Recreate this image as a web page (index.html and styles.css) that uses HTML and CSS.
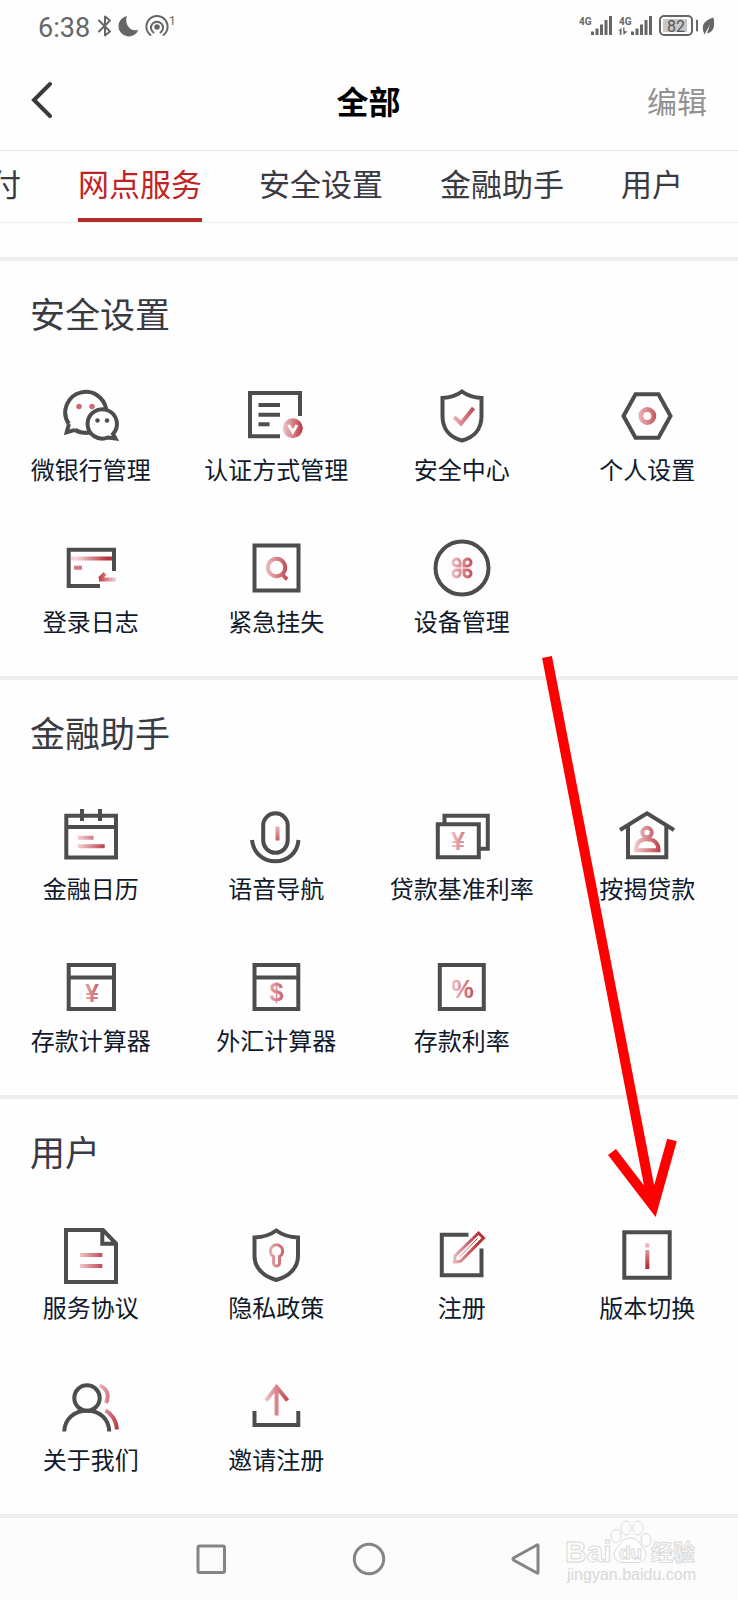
FILE: index.html
```html
<!DOCTYPE html>
<html lang="zh-CN">
<head>
<meta charset="utf-8">
<meta name="viewport" content="width=device-width, initial-scale=1">
<title>全部</title>
<link rel="stylesheet" href="styles.css">
</head>
<body>
<svg class="defs" aria-hidden="true">
  <defs>
    <linearGradient id="red" gradientUnits="userSpaceOnUse" x1="16" y1="0" x2="46" y2="0">
      <stop offset="0" stop-color="#f5d5d8"/><stop offset="1" stop-color="#b9303a"/>
    </linearGradient>
    <linearGradient id="red-down" gradientUnits="userSpaceOnUse" x1="0" y1="18" x2="0" y2="42">
      <stop offset="0" stop-color="#f0cdd0"/><stop offset="1" stop-color="#b4323a"/>
    </linearGradient>
    <linearGradient id="red-back" gradientUnits="userSpaceOnUse" x1="37" y1="0" x2="56" y2="0">
      <stop offset="0" stop-color="#bd3540"/><stop offset="1" stop-color="#f6dcde"/>
    </linearGradient>
    <linearGradient id="red-side" gradientUnits="userSpaceOnUse" x1="36" y1="0" x2="58" y2="0">
      <stop offset="0" stop-color="#f3cdd0"/><stop offset="1" stop-color="#b9303a"/>
    </linearGradient>
  </defs>
</svg>

<div class="screen">
  <div class="status">
    <div class="status-left">
      <span class="clock">6:38</span>
      <svg width="80" height="28" viewBox="0 0 80 28" aria-hidden="true">
        <path class="s-line" d="M4 8.500 15 19.500 10 23.500V4.500L15 8.500 4 19.500"/>
        <path class="s-fill" d="M32 4A10.300 10.300 0 1 0 43.500 17.500C37 21 28.500 13 32 4Z"/>
        <circle class="s-fill" cx="62" cy="15" r="2.800"/>
        <path class="s-line" d="M58.500 20.500A6 6 0 1 1 65.500 20.500M55.500 23A10.600 10.600 0 1 1 68.500 23"/>
        <text class="s-text" x="74" y="13" font-size="12">1</text>
      </svg>
    </div>
    <svg width="142" height="28" viewBox="0 0 142 28" aria-hidden="true">
      <text class="s-text s-net" x="1" y="13">4G</text>
      <path class="s-bars" d="M14.500 19.500V23M19 16.500V23M23.500 12.500V23M28 8V23M32.500 4V23"/>
      <text class="s-text s-net" x="41" y="13">4G</text>
      <path class="s-fill" d="M40.500 19 43.500 15.500V23H41.800V19ZM45 15.500H46.500V19L49.500 19.500 45.500 23Z"/>
      <path class="s-bars" d="M54.500 19.500V23M59 16.500V23M63.500 12.500V23M68 8V23M72.500 4V23"/>
      <rect x="85" y="7" width="24" height="13" fill="#c8c8c8"/>
      <rect class="s-line" x="82" y="4" width="32" height="19" rx="4"/>
      <text class="s-text s-batt" x="98" y="19.500" font-size="16">82</text>
      <path class="s-line" d="M119 8.500V18.500"/>
      <path class="s-fill" d="M126 21C122 11 130 7 135.500 5.500 137 14 136 20 129 21.500L132 12.500 126.500 22.500Z"/>
    </svg>
  </div>

  <header class="header">
    <button class="back" type="button" aria-label="返回">
      <svg width="24" height="38" viewBox="0 0 24 38"><path d="M20 3 4 19 20 35"/></svg>
    </button>
    <h1 class="title">全部</h1>
    <button class="edit" type="button">编辑</button>
  </header>

  <nav class="tabs">
    <a class="tab" href="#">付</a>
    <a class="tab tab-active" href="#">网点服务</a>
    <a class="tab" href="#safe">安全设置</a>
    <a class="tab" href="#finance">金融助手</a>
    <a class="tab" href="#user">用户</a>
  </nav>

  <main class="content">
    <section class="section" id="safe">
      <h2 class="section-title">安全设置</h2>
      <div class="grid">
        <a class="item" href="#">
          <svg class="icon" viewBox="0 0 60 60"><path d="M7.900 38 5.700 46.300 14 43.800M7.900 38A20.500 20.500 0 1 1 14 43.800Q19 47.500 27 46.500"/><circle cx="18" cy="20.500" r="2.800" class="dot"/><circle cx="31" cy="20.500" r="2.800" class="dot"/><path class="paper" d="M52 48A14.700 14.700 0 1 0 47 51.500L54.500 52.500Z"/><circle cx="36.500" cy="34.500" r="2.200" class="ink"/><circle cx="46" cy="34.500" r="2.200" class="ink"/></svg>
          <span class="label">微银行管理</span>
        </a>
        <a class="item" href="#">
          <svg class="icon" viewBox="0 0 60 60"><path d="M34 50.300H4V7H54V30M12.500 19H34M12.500 28.700H34M12.500 38.300H23.500"/><circle class="fill" cx="46.800" cy="42.300" r="10"/><path class="white" d="M42.500 39 46.800 46 51 39"/></svg>
          <span class="label">认证方式管理</span>
        </a>
        <a class="item" href="#">
          <svg class="icon" viewBox="0 0 60 60"><path d="M30 5.500Q38 11.500 49.500 12V30C49.500 43 42 51.500 30 54.500 18 51.500 10.500 43 10.500 30V12Q22 11.500 30 5.500Z"/><path class="red" d="M22 31 29 37.500 41.500 22"/></svg>
          <span class="label">安全中心</span>
        </a>
        <a class="item" href="#">
          <svg class="icon" viewBox="0 0 60 60"><path d="M18.500 8.300H41.500L53.500 30 41.500 51.700H18.500L6.500 30Z"/><circle class="red thick" cx="30.300" cy="30" r="6.500"/></svg>
          <span class="label">个人设置</span>
        </a>
        <a class="item" href="#">
          <svg class="icon" viewBox="0 0 60 60"><path d="M39 48H7.700V11.700H53V33"/><path class="red" d="M10 20.500H51"/><path class="dash" d="M13 29.700H21"/><path class="red-back" d="M38 41.500H55M38.500 41 44 35.500"/></svg>
          <span class="label">登录日志</span>
        </a>
        <a class="item" href="#">
          <svg class="icon" viewBox="0 0 60 60"><path d="M8.500 7.500H52.500V52.500H8.500Z"/><circle class="red" cx="30.500" cy="29.500" r="8.700"/><path class="red" d="M36 36 41 41.500"/></svg>
          <span class="label">紧急挂失</span>
        </a>
        <a class="item" href="#">
          <svg class="icon" viewBox="0 0 60 60"><circle cx="30" cy="30" r="26.500"/><path class="red thin" d="M28 28H24.500A3.500 3.500 0 1 1 28 24.500ZM32 28V24.500A3.500 3.500 0 1 1 35.500 28ZM28 32V35.500A3.500 3.500 0 1 1 24.500 32ZM32 32H35.500A3.500 3.500 0 1 1 32 35.500Z"/></svg>
          <span class="label">设备管理</span>
        </a>
      </div>
    </section>

    <section class="section" id="finance">
      <h2 class="section-title">金融助手</h2>
      <div class="grid">
        <a class="item" href="#">
          <svg class="icon" viewBox="0 0 60 60"><path d="M5.300 10.700H55V52.500H5.300ZM5 22H55M21 4V16M39 4V16"/><path class="red" d="M16.700 32.700H32.500M16.700 41.300H43.700"/></svg>
          <span class="label">金融日历</span>
        </a>
        <a class="item" href="#">
          <svg class="icon" viewBox="0 0 60 60"><rect x="17.200" y="8.300" width="24.500" height="39.500" rx="12.200"/><path d="M6 35C7.500 48 17 56.300 29.300 56.300S51.500 48 52.500 35"/><path class="red-down" d="M31.500 21.500V35.500"/></svg>
          <span class="label">语音导航</span>
        </a>
        <a class="item" href="#">
          <svg class="icon" viewBox="0 0 60 60"><path d="M12.500 18V10.700H55.800V43.700H48M5.800 19.300H46.800V52.300H5.800Z"/><text class="sign" x="26" y="45">¥</text></svg>
          <span class="label">贷款基准利率</span>
        </a>
        <a class="item" href="#">
          <svg class="icon" viewBox="0 0 60 60"><path d="M3 25 30 8.300 57 25M11 21V52.300H49.300V21"/><circle class="red" cx="30" cy="27.500" r="4.700"/><path class="red" d="M19 45.300C19 38 23 34.300 30 34.300S41.500 38 41.500 45.300Z"/></svg>
          <span class="label">按揭贷款</span>
        </a>
        <a class="item" href="#">
          <svg class="icon" viewBox="0 0 60 60"><path d="M7.700 8H53V52H7.700ZM7 20.500H53"/><text class="sign" x="31" y="45">¥</text></svg>
          <span class="label">存款计算器</span>
        </a>
        <a class="item" href="#">
          <svg class="icon" viewBox="0 0 60 60"><path d="M8.500 8H52.300V52H8.500ZM8 20.500H52"/><text class="sign" x="30.500" y="44">$</text></svg>
          <span class="label">外汇计算器</span>
        </a>
        <a class="item" href="#">
          <svg class="icon" viewBox="0 0 60 60"><path d="M7.800 8H51.800V52H7.800Z"/><text class="sign" x="30.500" y="41">%</text></svg>
          <span class="label">存款利率</span>
        </a>
      </div>
    </section>

    <section class="section" id="user">
      <h2 class="section-title">用户</h2>
      <div class="grid">
        <a class="item" href="#">
          <svg class="icon" viewBox="0 0 60 60"><path d="M5 6H42L55 19.500V58H5ZM41.300 6V19.700H55"/><path class="red" d="M19 31H41.300M19 42H41.300"/></svg>
          <span class="label">服务协议</span>
        </a>
        <a class="item" href="#">
          <svg class="icon" viewBox="0 0 60 60"><path d="M30.300 6.500Q39 13 52 13.500V32C52 44 43 52.500 30.300 56 17.500 52.500 8.500 44 8.500 32V13.500Q21.500 13 30.300 6.500Z"/><path class="red thin" d="M27.500 32.500A6.200 6.200 0 1 1 33.500 32.500L33.500 39A3 3 0 0 1 27.500 39Z"/></svg>
          <span class="label">隐私政策</span>
        </a>
        <a class="item" href="#">
          <svg class="icon" viewBox="0 0 60 60"><path d="M36.500 10.700H9.800V51.300H49.500V24.500"/><path class="red thin" d="M46.500 9 51.500 14 28.500 37.300 22.500 38 23 32Z"/><path class="red hair" d="M27.500 33 45.500 14.500"/></svg>
          <span class="label">注册</span>
        </a>
        <a class="item" href="#">
          <svg class="icon" viewBox="0 0 60 60"><path d="M7.300 8.300H52.700V53.700H7.300Z"/><path class="red-down" d="M30.300 19V23.500M30.300 26V45"/></svg>
          <span class="label">版本切换</span>
        </a>
        <a class="item" href="#">
          <svg class="icon" viewBox="0 0 60 60"><circle cx="26" cy="22" r="12.700"/><path d="M3.300 55.500C3.500 43 13 34.700 26 34.700S48 43 48.200 55.500"/><path class="red-side" d="M38.500 9.500C46 12.500 48.500 19 45 27M44.500 34.500C51 38 55 44.500 56 53.500"/></svg>
          <span class="label">关于我们</span>
        </a>
        <a class="item" href="#">
          <svg class="icon" viewBox="0 0 60 60"><path d="M8.500 35V49H52.300V35"/><path class="red" d="M30.500 10V39.500M20 24.500 30.500 11 41.500 24.500"/></svg>
          <span class="label">邀请注册</span>
        </a>
      </div>
    </section>
  </main>

  <footer class="sysnav">
    <button class="sysbtn" type="button" aria-label="最近任务"><svg viewBox="0 0 34 34"><rect x="4" y="4" width="26.500" height="26.500" rx="1.500"/></svg></button>
    <button class="sysbtn" type="button" aria-label="主页"><svg viewBox="0 0 34 34"><circle cx="17" cy="17" r="14.700"/></svg></button>
    <button class="sysbtn" type="button" aria-label="返回上一级"><svg viewBox="0 0 34 34"><path d="M28 3.500V30.500Q28 31.500 27 31L3.500 18Q2.500 17 3.500 16L27 3Q28 2.500 28 3.500Z"/></svg></button>
  </footer>

  <svg class="arrow" width="140" height="580" viewBox="0 0 140 580" aria-hidden="true">
    <path d="M7 17 111.500 558M72 512 113.500 566 132 500"/>
  </svg>

  <svg class="watermark" width="140" height="70" viewBox="0 0 140 70" aria-hidden="true">
    <text class="wm-bai" x="3" y="42">Bai</text>
    <g class="wm-paw">
      <ellipse cx="54" cy="16" rx="5" ry="6.500"/><ellipse cx="64" cy="8" rx="5" ry="7"/><ellipse cx="76" cy="8" rx="5" ry="7"/><ellipse cx="84" cy="20" rx="5" ry="6.500"/>
      <path d="M68 18C77 18 78 25 82 29 87 36 82 43 74 42.500H62C54 43 49 36 54 29 58 25 60 18 68 18Z"/>
    </g>
    <text class="wm-du" x="57" y="39">du</text>
    <text class="wm-cn" x="89" y="40">经验</text>
    <text class="wm-url" x="5" y="60">jingyan.baidu.com</text>
  </svg>
</div>
</body>
</html>
```
FILE: styles.css
```css
* { box-sizing: border-box; }

body {
  margin: 0;
  background: #fefefe;
  font-family: "Noto Sans CJK SC", "Noto Sans", sans-serif;
  color: #3a3a42;
}

button {
  padding: 0;
  border: 0;
  background: none;
  font: inherit;
  color: inherit;
}

a { color: inherit; text-decoration: none; }

.defs { position: absolute; width: 0; height: 0; }

.screen {
  position: relative;
  display: flex;
  flex-direction: column;
  min-height: 100vh;
  overflow: hidden;
}

/* status bar */
.status {
  display: flex;
  justify-content: space-between;
  align-items: center;
  height: 52px;
  padding: 0 18px 0 38px;
}
.status-left { display: flex; align-items: center; gap: 5px; }
.clock {
  font: 27px/32px Roboto, sans-serif;
  color: #666;
  padding-top: 4px;
}
.s-line { fill: none; stroke: #666; stroke-width: 2; stroke-linejoin: round; stroke-linecap: round; }
.s-bars { fill: none; stroke: #666; stroke-width: 3; }
.s-fill { fill: #666; }
.s-text { fill: #666; font-family: Roboto, sans-serif; }
.s-net { font-weight: 700; font-size: 10px; }
.s-batt { text-anchor: middle; fill: #555; }

/* header */
.header {
  display: grid;
  grid-template-columns: 1fr auto 1fr;
  align-items: center;
  height: 99px;
  padding: 0 31px 2px 30px;
  border-bottom: 1px solid #e6e6e6;
}
.back { display: flex; justify-self: start; }
.back path { fill: none; stroke: #3a3a3a; stroke-width: 4; stroke-linecap: round; }
.title { margin: 0; font-size: 32px; line-height: 48px; font-weight: 700; color: #000; }
.edit { justify-self: end; font-size: 30px; line-height: 48px; color: #929292; }

/* category tabs */
.tabs {
  display: flex;
  gap: 57px;
  margin-left: -10px;
  border-bottom: 1px solid #f0f0f0;
  white-space: nowrap;
}
.tab {
  padding-bottom: 4px;
  font-size: 31px;
  line-height: 63px;
  border-bottom: 4px solid transparent;
}
.tab-active { color: #c02422; border-color: #b22c2b; }

/* sections */
.content { flex: 1; padding-top: 34px; }
.section {
  padding: 28px 0 40px;
  border-top: 4px solid #eeeeee;
}
.section-title {
  margin: 0 0 49px 30px;
  font-size: 35px;
  line-height: 48px;
  font-weight: 400;
}
.grid {
  display: grid;
  grid-template-columns: repeat(4, 1fr);
  row-gap: 54px;
  margin: 0 -2px;
}
.item {
  display: flex;
  flex-direction: column;
  align-items: center;
  gap: 8px;
}
.label { font-size: 24px; line-height: 30px; color: #101a2c; white-space: nowrap; }

/* icons */
.icon { width: 60px; height: 60px; fill: none; stroke: #4d4d4d; stroke-width: 4; }
.icon .red { stroke: url(#red); }
.icon .red-down { stroke: url(#red-down); }
.icon .red-back { stroke: url(#red-back); }
.icon .red-side { stroke: url(#red-side); }
.icon .dash { stroke: #cf7a81; }
.icon .thick { stroke-width: 5; }
.icon .thin { stroke-width: 3; }
.icon .hair { stroke-width: 1; }
.icon .dot { fill: #cf6d74; stroke: none; }
.icon .ink { fill: #4d4d4d; stroke: none; }
.icon .fill { fill: url(#red-side); stroke: none; }
.icon .paper { fill: #fefefe; }
.icon .white { stroke: #fff; stroke-width: 3; }
.icon .sign {
  fill: url(#red);
  stroke: none;
  font: 700 25px "Liberation Sans", sans-serif;
  text-anchor: middle;
}

/* system navigation */
.sysnav {
  display: flex;
  justify-content: center;
  align-items: center;
  gap: 124px;
  height: 86px;
  border-top: 4px solid #eeeeee;
  background: #fcfcfc;
}
.sysbtn { display: flex; }
.sysbtn svg { width: 34px; height: 34px; fill: none; stroke: #858585; stroke-width: 3; }

/* overlays */
.arrow { position: absolute; left: 540px; top: 640px; pointer-events: none; }
.arrow path { fill: none; stroke: #fe0000; stroke-width: 10; stroke-miterlimit: 10; }

.watermark {
  position: absolute;
  right: 36px;
  bottom: 10px;
  fill: #fdfdfd;
  stroke: #dadada;
  stroke-width: 1;
  pointer-events: none;
}
.wm-bai { font: 700 30px "Liberation Sans", sans-serif; }
.wm-du { font: 700 19px "Liberation Sans", sans-serif; }
.wm-cn { font: 700 22px "Noto Sans CJK SC", sans-serif; }
.wm-url { font: 16px "Liberation Sans", sans-serif; fill: #d8d8d8; stroke: none; }
```
